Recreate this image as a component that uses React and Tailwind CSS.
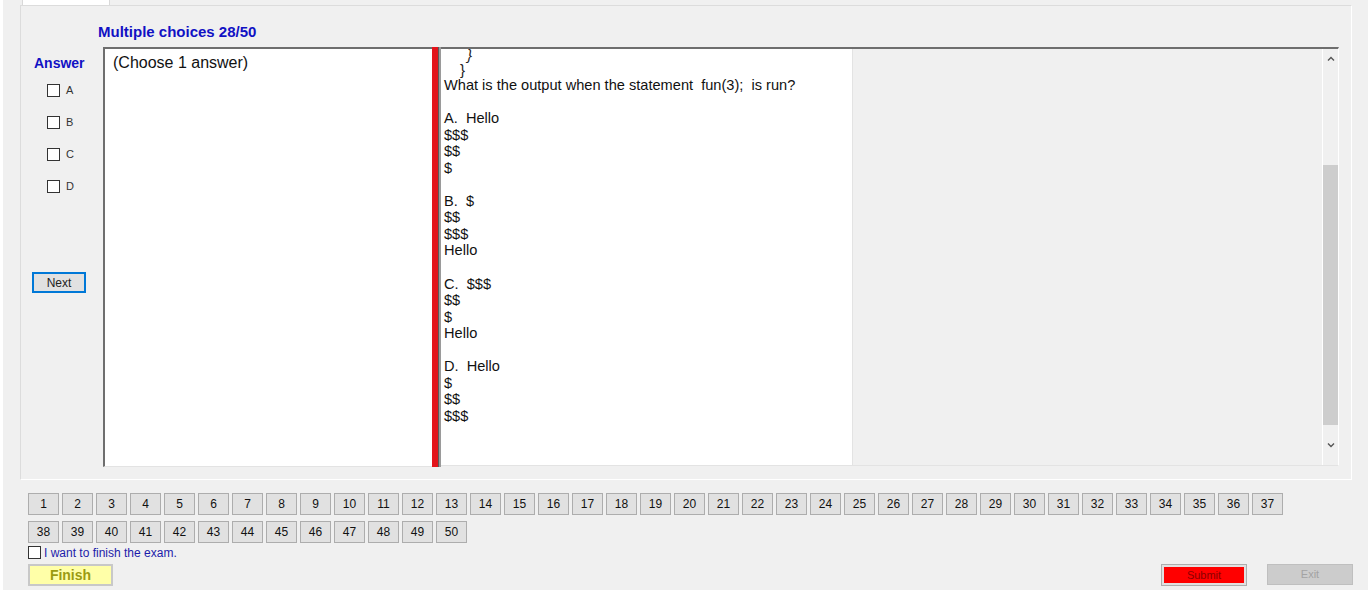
import React from 'react';

const FONT = { fontFamily: '"Liberation Sans", Arial, sans-serif' };

const QUESTION = [
  'What is the output when the statement  fun(3);  is run?',
  '',
  'A.  Hello',
  '$$$',
  '$$',
  '$',
  '',
  'B.  $',
  '$$',
  '$$$',
  'Hello',
  '',
  'C.  $$$',
  '$$',
  '$',
  'Hello',
  '',
  'D.  Hello',
  '$',
  '$$',
  '$$$',
];

function Box({ className = '' }) {
  return <span className={`block w-[13px] h-[13px] bg-white border border-[#333] shrink-0 ${className}`} />;
}

function NumButton({ n }) {
  return (
    <button className="w-[31px] h-[22px] bg-[#e1e1e1] border border-[#adadad] text-[12px] text-[#111] leading-none flex items-center justify-center">
      {n}
    </button>
  );
}

export default function App() {
  const row1 = Array.from({ length: 37 }, (_, i) => i + 1);
  const row2 = Array.from({ length: 13 }, (_, i) => i + 38);

  return (
    <div className="w-[1372px] h-[594px] bg-white overflow-hidden" style={FONT}>
      <div className="ml-[3px] w-[1365px] h-[590px] bg-[#f0f0f0] flex flex-col">
        {/* tab strip */}
        <div className="h-[5px] flex">
          <div className="ml-[19px] w-[88px] bg-white border-r border-l border-[#d9d9d9]" />
        </div>

        {/* tab page */}
        <div className="ml-[17px] w-[1332px] h-[475px] border border-[#dcdcdc] border-r-white border-b-white flex flex-col">
          <div className="pl-[77px] pt-[17px] text-[15px] leading-[17px] font-bold text-[#1111c4]">
            Multiple choices 28/50
          </div>

          <div className="mt-[7px] flex">
            {/* answer column */}
            <div className="w-[82px] flex flex-col">
              <div className="pl-[13px] mt-[8px] text-[14px] leading-[16px] font-bold text-[#1111c4]">Answer</div>
              <div className="mt-[13px] flex flex-col gap-[19px] pl-[26px]">
                {['A', 'B', 'C', 'D'].map(l => (
                  <div key={l} className="flex items-center h-[13px]">
                    <Box />
                    <span className="ml-[6px] text-[11px] text-[#333] leading-none">{l}</span>
                  </div>
                ))}
              </div>
              <button className="mt-[79px] ml-[11px] w-[54px] h-[21px] bg-[#e1e1e1] border-2 border-[#0078d7] text-[12px] text-[#222] leading-none flex items-center justify-center">
                Next
              </button>
            </div>

            {/* choose box */}
            <div className="w-[329px] h-[420px] bg-white border-t-2 border-l-2 border-[#6e6e6e] border-b border-b-[#e3e3e3] border-r-0 pl-[8px] pt-[5px]">
              <div className="text-[16px] leading-[18px] text-[#111]">(Choose 1 answer)</div>
            </div>

            {/* splitter */}
            <div className="w-[6px] h-[420px] bg-[#e3141b]" />
            <div className="w-[3px] h-[420px] bg-[#9a9a9a] border-l border-[#5a5a5a]" />

            {/* question box */}
            <div className="w-[898px] h-[419px] border-t-2 border-[#6e6e6e] border-b border-b-[#e3e3e3] border-r border-r-white flex">
              <div className="w-[412px] bg-white border-r border-[#e3e3e3] overflow-hidden pl-[3px]">
                <div className="-mt-[2px] text-[15px] leading-[15px] text-[#222] pl-[23px] italic">{'}'}</div>
                <div className="text-[15px] leading-[15px] text-[#222] pl-[16px]">{'}'}</div>
                <div className="text-[14.6px] leading-[16.55px] text-[#111]">
                  {QUESTION.map((line, i) => (
                    <div key={i} className="h-[16.55px] whitespace-pre">{line}</div>
                  ))}
                </div>
              </div>
              <div className="flex-1" />
              <div className="w-[16px] flex flex-col border-l border-white">
                <div className="h-[18px] flex items-center justify-center">
                  <svg width="8" height="5" viewBox="0 0 8 5" fill="none" stroke="#555" strokeWidth="1.4">
                    <polyline points="1,4.5 4,1.5 7,4.5" />
                  </svg>
                </div>
                <div className="h-[98px]" />
                <div className="h-[260px] bg-[#cdcdcd]" />
                <div className="flex-1 flex items-center justify-center">
                  <svg width="8" height="5" viewBox="0 0 8 5" fill="none" stroke="#555" strokeWidth="1.4">
                    <polyline points="1,0.5 4,3.5 7,0.5" />
                  </svg>
                </div>
              </div>
            </div>
          </div>
        </div>

        {/* question numbers */}
        <div className="mt-[13px] pl-[25px] flex gap-[3px]">
          {row1.map(n => <NumButton key={n} n={n} />)}
        </div>
        <div className="mt-[6px] pl-[25px] flex gap-[3px]">
          {row2.map(n => <NumButton key={n} n={n} />)}
        </div>

        <div className="mt-[2px] pl-[25px] flex items-center h-[14px]">
          <Box />
          <span className="ml-[3px] mt-[2px] text-[12px] leading-none text-[#1c1caa]">I want to finish the exam.</span>
        </div>

        <div className="mt-[5px] pl-[25px] pr-[15px] flex items-start">
          <button className="w-[85px] h-[22px] bg-[#ffffa8] border-2 border-[#c8c8c8] text-[14px] font-bold text-[#9b9b12] leading-none flex items-center justify-center">
            Finish
          </button>
          <div className="flex-1" />
          <button className="w-[86px] h-[22px] bg-[#e1e1e1] border border-[#adadad] p-[2px]">
            <span className="w-full h-full bg-[#ff0000] text-[11px] text-[#8b0000] leading-none flex items-center justify-center">
              Submit
            </span>
          </button>
          <button className="ml-[20px] w-[86px] h-[21px] bg-[#cccccc] border border-[#bfbfbf] text-[11px] text-[#a3a3a3] leading-none flex items-center justify-center">
            Exit
          </button>
        </div>
      </div>
    </div>
  );
}
